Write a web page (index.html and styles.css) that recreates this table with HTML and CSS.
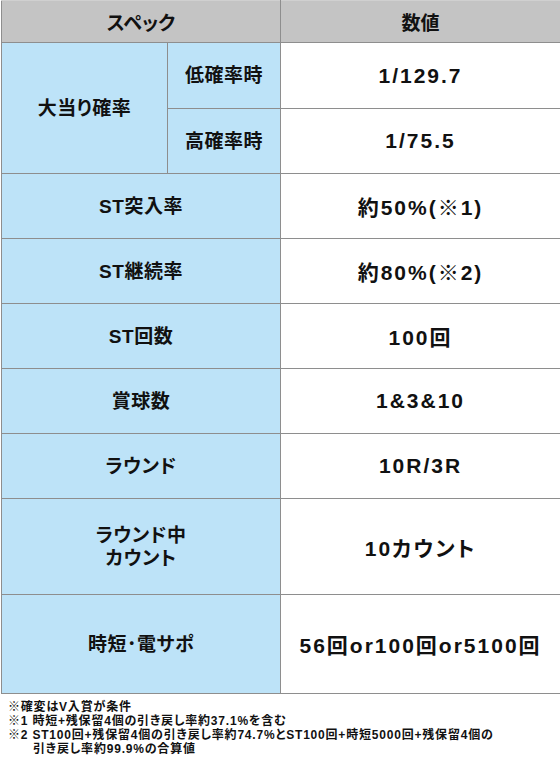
FILE: index.html
```html
<!DOCTYPE html>
<html lang="ja">
<head>
<meta charset="utf-8">
<link rel="stylesheet" href="styles.css">
</head>
<body>
<table class="spec">
  <colgroup>
    <col class="c1"><col class="c2"><col class="c3">
  </colgroup>
  <thead>
    <tr class="head"><th colspan="2">スペック</th><th>数値</th></tr>
  </thead>
  <tbody>
    <tr class="r1"><th rowspan="2" class="lbl">大当り確率</th><th class="lbl sub">低確率時</th><td class="num">1/129.7</td></tr>
    <tr class="r"><th class="lbl sub">高確率時</th><td class="num">1/75.5</td></tr>
    <tr class="r"><th colspan="2" class="lbl">ST突入率</th><td class="num">約50%(※1)</td></tr>
    <tr class="r"><th colspan="2" class="lbl">ST継続率</th><td class="num">約80%(※2)</td></tr>
    <tr class="r"><th colspan="2" class="lbl">ST回数</th><td class="num">100回</td></tr>
    <tr class="r"><th colspan="2" class="lbl">賞球数</th><td class="num">1&amp;3&amp;10</td></tr>
    <tr class="r"><th colspan="2" class="lbl">ラウンド</th><td class="num">10R/3R</td></tr>
    <tr class="rt"><th colspan="2" class="lbl">ラウンド中<br>カウント</th><td class="num">10カウント</td></tr>
    <tr class="rb"><th colspan="2" class="lbl">時短･電サポ</th><td class="num">56回or100回or5100回</td></tr>
  </tbody>
</table>
<div class="notes">
  <p>※確変はV入賞が条件</p>
  <p>※1 時短+残保留4個の引き戻し率約37.1%を含む</p>
  <p>※2 ST100回+残保留4個の引き戻し率約74.7%とST100回+時短5000回+残保留4個の</p>
  <p class="ind">引き戻し率約99.9%の合算値</p>
</div>
</body>
</html>
```
FILE: styles.css
```css
html, body {
  margin: 0;
  padding: 0;
  background: #ffffff;
}
body {
  font-family: "Liberation Sans", "Noto Sans CJK JP", sans-serif;
  font-feature-settings: "palt";
  color: #111111;
  width: 560px;
}
.spec {
  border-collapse: collapse;
  width: 559px;
  margin-left: 1px;
  table-layout: fixed;
}
.c1 { width: 166px; }
.c2 { width: 113px; }
.c3 { width: 280px; }
.spec th, .spec td {
  border: 1px solid #8e8e8e;
  padding: 0;
  text-align: center;
  vertical-align: middle;
  font-weight: bold;
}
.head th {
  background: #c4c4c4;
  height: 41px;
  font-size: 19px;
  border-top-color: #d0d0d0;
}
.lbl {
  background: #bde3f8;
  font-size: 19px;
  letter-spacing: 0.5px;
  line-height: 23px;
}
.sub { border-left-color: #9aa6ae; }
.num {
  background: #ffffff;
  font-size: 21px;
  letter-spacing: 2px;
}
.r1 th, .r1 td { height: 65px; }
.r th, .r td { height: 64px; }
.rt th, .rt td { height: 95px; }
.rb th, .rb td { height: 98px; }
.notes {
  padding: 6px 0 0 8px;
  font-size: 12px;
  font-weight: bold;
  line-height: 14px;
  letter-spacing: 0.8px;
}
.notes p { margin: 0; }
.notes .ind { padding-left: 25px; }
```
